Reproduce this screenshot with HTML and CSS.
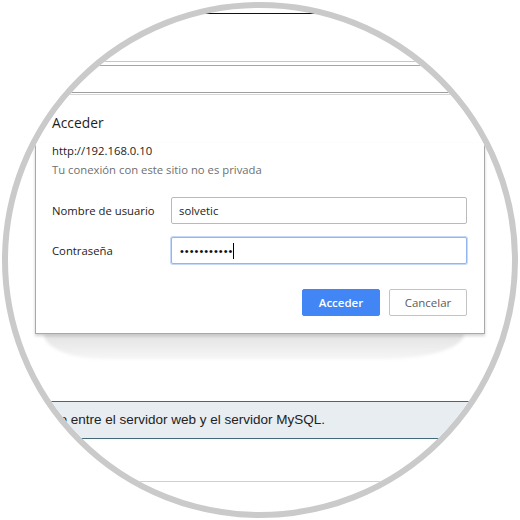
FILE: index.html
```html
<!DOCTYPE html>
<html lang="es">
<head>
<meta charset="utf-8">
<title>Acceder</title>
<link rel="stylesheet" href="styles.css">
</head>
<body>
<div class="lens">
  <div class="screen">
    <div class="rule rule-black"></div>
    <div class="rule rule-1"></div>
    <div class="rule rule-2"></div>
    <div class="rule rule-3"></div>
    <div class="rule rule-4"></div>
    <div class="dialog">
      <div class="dialog-head"><h1 class="dialog-title">Acceder</h1></div>
      <div class="dialog-body">
        <p class="url">http://192.168.0.10</p>
        <p class="warn">Tu conexión con este sitio no es privada</p>
        <div class="fields">
          <span class="label">Nombre de usuario</span>
          <div class="input">solvetic</div>
          <span class="label">Contraseña</span>
          <div class="input focused"><span class="dots">•••••••••••</span><span class="caret"></span></div>
        </div>
        <div class="actions">
          <button class="btn primary" type="button">Acceder</button>
          <button class="btn" type="button">Cancelar</button>
        </div>
      </div>
    </div>
    <div class="backdrop"></div>
    <div class="notice">do entre el servidor web y el servidor MySQL.</div>
    <div class="rule rule-5"></div>
  </div>
</div>
</body>
</html>
```
FILE: styles.css
```css
html, body {
  margin: 0;
  padding: 0;
  background: #ffffff;
}
body {
  width: 520px;
  height: 520px;
  overflow: hidden;
}
.lens {
  margin: 2px;
  width: 516px;
  height: 516px;
  box-sizing: border-box;
  border: 6px solid #cacaca;
  border-radius: 50%;
  overflow: hidden;
  background: #ffffff;
}
.screen {
  width: 504px;
  display: flex;
  flex-direction: column;
}
.rule {
  height: 1px;
  flex: none;
}
.rule-black { margin-top: 5px; background: #111111; }
.rule-1 { margin-top: 47px; background: #c6c6c6; }
.rule-2 { margin-top: 3px; background: #a6a6a6; }
.rule-3 { margin-top: 26px; background: #9e9e9e; }
.rule-4 { margin-top: 1px; background: #d6d6d6; }
.rule-5 { margin-top: 42px; background: #cfcfcf; }

.dialog {
  margin-left: 27px;
  width: 450px;
  font-family: "Open Sans", "Noto Sans", sans-serif;
  color: #222222;
  position: relative;
  z-index: 1;
}
.dialog-head {
  height: 48px;
  box-sizing: border-box;
  padding: 19px 17px 0 17px;
  background: #ffffff;
}
.dialog-title {
  margin: 0;
  font-size: 13.8px;
  line-height: 18px;
  font-weight: 400;
  color: #1e1e1e;
}
.dialog-body {
  background: #ffffff;
  border: 1px solid #a8a8a8;
  border-top: none;
  padding: 0 17px 17px 16px;
  box-shadow: 0 2px 3px rgba(0, 0, 0, 0.18);
}
.url {
  margin: 0;
  font-size: 11.3px;
  line-height: 16px;
  color: #222222;
}
.warn {
  margin: 3px 0 0 0;
  font-size: 11.3px;
  line-height: 16px;
  color: #6f6f6f;
}
.fields {
  margin-top: 19px;
  display: grid;
  grid-template-columns: 119px 296px;
  row-gap: 13px;
  align-items: center;
}
.label {
  font-size: 11.3px;
  line-height: 16px;
  color: #222222;
}
.input {
  height: 27px;
  box-sizing: border-box;
  border: 1px solid #bababa;
  border-radius: 2px;
  padding-left: 7px;
  display: flex;
  align-items: center;
  font-size: 11.3px;
  color: #222222;
  background: #ffffff;
}
.input.focused {
  border-color: #93b6f2;
  box-shadow: 0 0 0 1px #c6d9f9;
  padding-left: 8px;
}
.dots {
  font-family: "Liberation Sans", Arial, sans-serif;
  font-size: 11px;
  letter-spacing: 1px;
  color: #111111;
}
.caret {
  display: inline-block;
  width: 1px;
  height: 16px;
  background: #000000;
}
.actions {
  margin-top: 25px;
  display: flex;
  justify-content: flex-end;
  gap: 9px;
}
.btn {
  width: 78px;
  height: 27px;
  box-sizing: border-box;
  padding: 0;
  margin: 0;
  border: 1px solid #c3c3c3;
  border-radius: 2px;
  background: #ffffff;
  color: #5c5c5c;
  font-family: "Open Sans", "Noto Sans", sans-serif;
  font-size: 11.5px;
  font-weight: 400;
}
.btn.primary {
  background: #4285f4;
  border-color: #4285f4;
  color: #ffffff;
  font-weight: 600;
}
.backdrop {
  margin-left: 36px;
  width: 420px;
  height: 25px;
  flex: none;
  background: linear-gradient(to bottom, #e3e3e3, #f0f0f0 70%, #f6f6f6);
  border-radius: 0 0 80px 60px / 0 0 25px 25px;
  filter: blur(1.5px);
}
.notice {
  margin-top: 42px;
  height: 36px;
  flex: none;
  border-top: 1px solid #42687a;
  border-bottom: 1px solid #42687a;
  background: #e8edf1;
  padding-left: 44px;
  font-family: "Liberation Sans", Arial, sans-serif;
  font-size: 13.5px;
  line-height: 36px;
  color: #222222;
  white-space: nowrap;
}
```
